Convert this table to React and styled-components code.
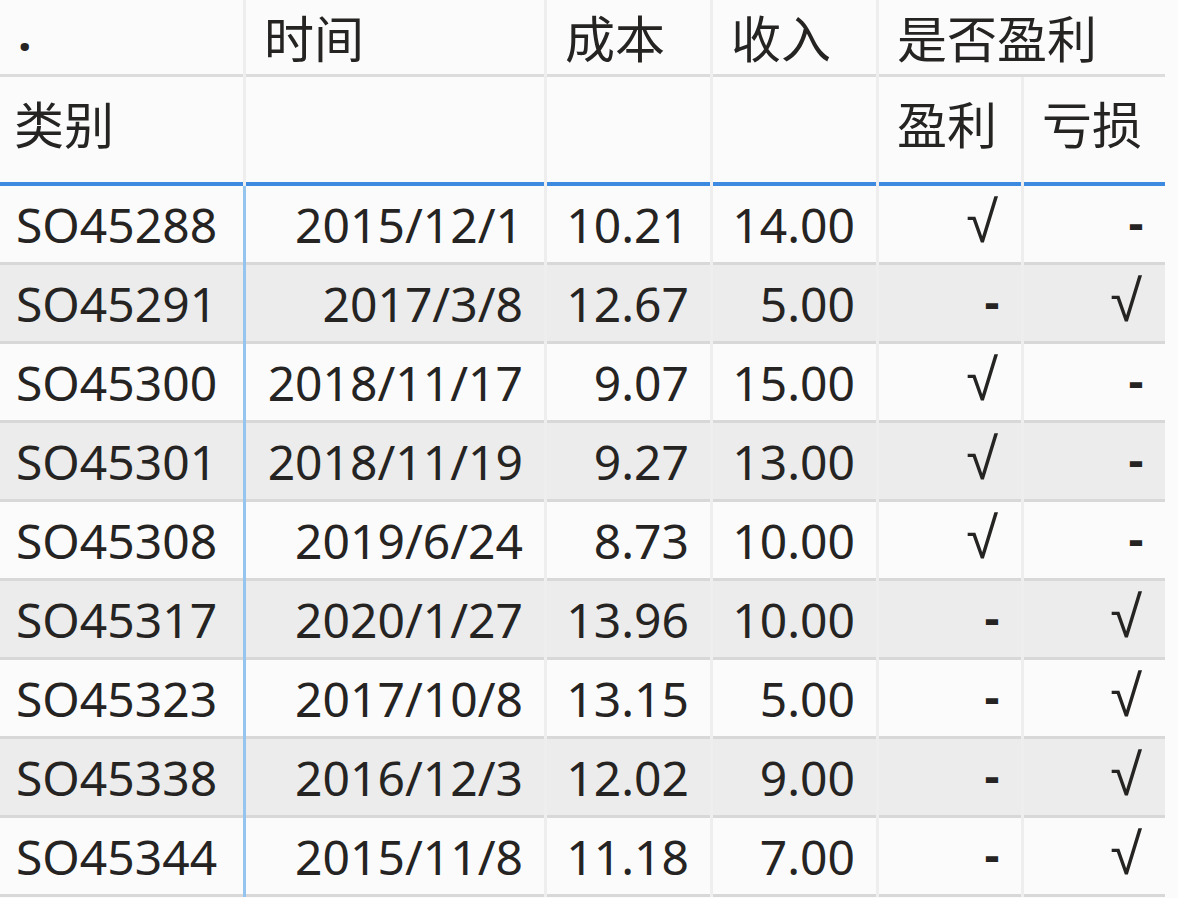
import React from 'react';
import styled, { createGlobalStyle } from 'styled-components';

const GlobalStyle = createGlobalStyle`
  body {
    margin: 0;
    background: #fbfbfb;
  }
`;

const rows = [
  ['SO45288', '2015/12/1', '10.21', '14.00', '√', '-'],
  ['SO45291', '2017/3/8', '12.67', '5.00', '-', '√'],
  ['SO45300', '2018/11/17', '9.07', '15.00', '√', '-'],
  ['SO45301', '2018/11/19', '9.27', '13.00', '√', '-'],
  ['SO45308', '2019/6/24', '8.73', '10.00', '√', '-'],
  ['SO45317', '2020/1/27', '13.96', '10.00', '-', '√'],
  ['SO45323', '2017/10/8', '13.15', '5.00', '-', '√'],
  ['SO45338', '2016/12/3', '12.02', '9.00', '-', '√'],
  ['SO45344', '2015/11/8', '11.18', '7.00', '-', '√'],
];

const Matrix = styled.div`
  display: grid;
  grid-template-columns: 243px 298px 163px 163px 142px 141px;
  column-gap: 3px;
  width: 1165px;
  background: #eeeeee;
  font-family: "Noto Sans", "Noto Sans CJK SC", sans-serif;
  color: #252423;
`;

const HeadCell = styled.div`
  grid-column: ${(p) => (p.span ? `span ${p.span}` : 'auto')};
  background: #fbfbfb;
  font-family: "Noto Sans CJK SC", sans-serif;
  font-size: 50px;
  line-height: 1.35;
  padding-left: ${(p) => (p.first ? '14px' : '18px')};
  display: flex;
  align-items: ${(p) => (p.top ? 'center' : 'flex-start')};
`;

const TopHead = styled(HeadCell)`
  height: 74px;
  border-bottom: 3px solid #dcdcdc;
`;

const SubHead = styled(HeadCell)`
  height: 93px;
  padding-top: 12px;
  border-bottom: 4px solid #3d8ae0;
`;

const Dot = styled.span`
  font-family: "Noto Sans", sans-serif;
  font-size: 48px;
  font-weight: 700;
  padding-left: 4px;
  padding-bottom: 8px;
`;

const Cell = styled.div`
  height: 76px;
  border-bottom: 3px solid #d8d8d8;
  background: ${(p) => (p.shade ? '#ececec' : '#fbfbfb')};
  display: flex;
  align-items: center;
  justify-content: ${(p) => (p.left ? 'flex-start' : 'flex-end')};
  padding: ${(p) => (p.left ? '0 0 0 16px' : '0 21px 0 0')};
  font-size: 48px;
  box-shadow: ${(p) => (p.left ? '3px 0 0 #95c4ef' : 'none')};
`;

const Mark = styled.span`
  font-family: "Liberation Sans", sans-serif;
  font-size: ${(p) => (p.check ? '58px' : '48px')};
  line-height: 1;
  font-weight: ${(p) => (p.check ? 400 : 700)};
  padding-right: ${(p) => (p.check ? '2px' : '0')};
  margin-top: ${(p) => (p.check ? '-4px' : '0')};
`;

export default function App() {
  return (
    <>
      <GlobalStyle />
      <Matrix>
        <TopHead first top><Dot>.</Dot></TopHead>
        <TopHead top>时间</TopHead>
        <TopHead top>成本</TopHead>
        <TopHead top>收入</TopHead>
        <TopHead top span={2}>是否盈利</TopHead>

        <SubHead first>类别</SubHead>
        <SubHead />
        <SubHead />
        <SubHead />
        <SubHead>盈利</SubHead>
        <SubHead>亏损</SubHead>

        {rows.map((r, i) =>
          r.map((v, j) => (
            <Cell key={`${i}-${j}`} shade={i % 2 === 1} left={j === 0}>
              {j >= 4 ? <Mark check={v === '√'}>{v}</Mark> : v}
            </Cell>
          ))
        )}
      </Matrix>
    </>
  );
}
